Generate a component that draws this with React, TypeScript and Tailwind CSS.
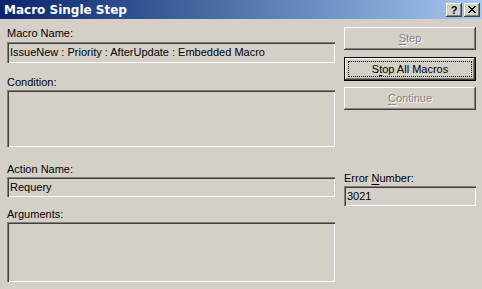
const raised =
  'shadow-[inset_-1px_-1px_0_#404040,inset_1px_1px_0_#ffffff,inset_-2px_-2px_0_#808080,inset_2px_2px_0_#d4d0c8]'
const sunken =
  'shadow-[inset_1px_1px_0_#808080,inset_2px_2px_0_#404040,inset_-1px_-1px_0_#ffffff,inset_-2px_-2px_0_#d4d0c8]'
const disabledText = 'text-[#808080] [text-shadow:1px_1px_0_#ffffff]'

function Field({ value, h }: { value?: string; h: string }) {
  return (
    <div className={`${sunken} ${h} bg-[#d4d0c8] px-[3px] pt-[3px] leading-[14px] text-black whitespace-nowrap overflow-hidden`}>
      {value}
    </div>
  )
}

function Label({ children, className = '' }: { children: React.ReactNode; className?: string }) {
  return <div className={`h-[13px] leading-[13px] ${className}`}>{children}</div>
}

function Button({
  children,
  disabled,
  isDefault,
  className = '',
}: {
  children: React.ReactNode
  disabled?: boolean
  isDefault?: boolean
  className?: string
}) {
  if (isDefault) {
    return (
      <div className={`h-[24px] border border-black ${className}`}>
        <div className={`${raised} h-full bg-[#d4d0c8] p-[3px]`}>
          <div className="h-full border border-dotted border-black flex items-center justify-center text-black">
            {children}
          </div>
        </div>
      </div>
    )
  }
  return (
    <div
      className={`${raised} h-[23px] bg-[#d4d0c8] flex items-center justify-center ${
        disabled ? disabledText : 'text-black'
      } ${className}`}
    >
      {children}
    </div>
  )
}

function CaptionButton({ children }: { children: React.ReactNode }) {
  return (
    <div className={`${raised} w-[16px] h-[14px] bg-[#d4d0c8] flex items-center justify-center`}>
      {children}
    </div>
  )
}

export default function App() {
  return (
    <div
      className="w-[482px] h-[289px] bg-[#d4d0c8] text-[11px] overflow-hidden"
      style={{ fontFamily: '"Liberation Sans", Arial, sans-serif' }}
    >
      {/* Title bar */}
      <div className="h-[19px] bg-linear-to-r from-[#0a246a] to-[#a6caf0] flex items-center pl-[4px] pr-[2px]">
        <span className="text-white font-bold text-[12px] leading-none font-['DejaVu_Sans',sans-serif]">
          Macro Single Step
        </span>
        <div className="ml-auto flex gap-[2px]">
          <CaptionButton>
            <span className="font-bold text-black text-[11px] leading-none mt-[1px]">?</span>
          </CaptionButton>
          <CaptionButton>
            <svg width="8" height="7" viewBox="0 0 8 7" shapeRendering="crispEdges">
              <path
                d="M0 0h2v1h-2zM6 0h2v1h-2zM1 1h2v1h-2zM5 1h2v1h-2zM2 2h4v1h-4zM3 3h2v1h-2zM2 4h4v1h-4zM1 5h2v1h-2zM5 5h2v1h-2zM0 6h2v1h-2zM6 6h2v1h-2z"
                fill="#000"
              />
            </svg>
          </CaptionButton>
        </div>
      </div>

      <div className="flex pl-[7px] pt-[7px]">
        {/* Left column */}
        <div className="w-[328px] flex flex-col">
          <Label className="mt-[1px]">Macro Name:</Label>
          <div className="mt-[2px]">
            <Field h="h-[21px]" value="IssueNew : Priority : AfterUpdate : Embedded Macro" />
          </div>
          <Label className="mt-[13px]">Condition:</Label>
          <div className="mt-[1px]">
            <Field h="h-[57px]" />
          </div>
          <Label className="mt-[16px]">Action Name:</Label>
          <div className="mt-[1px]">
            <Field h="h-[20px]" value="Requery" />
          </div>
          <Label className="mt-[11px]">Arguments:</Label>
          <div className="mt-[1px]">
            <Field h="h-[60px]" />
          </div>
        </div>

        {/* Right column */}
        <div className="w-[132px] ml-[9px] flex flex-col">
          <Button disabled className="mt-[1px]">
            <span>
              <span className="underline underline-offset-[2px]">S</span>tep
            </span>
          </Button>
          <Button isDefault className="mt-[7px]">
            <span>
              S<span className="underline underline-offset-[2px]">t</span>op All Macros
            </span>
          </Button>
          <Button disabled className="mt-[6px]">
            <span>
              <span className="underline underline-offset-[2px]">C</span>ontinue
            </span>
          </Button>
          <Label className="mt-[62px]">
            Error <span className="underline underline-offset-[2px]">N</span>umber:
          </Label>
          <div className="mt-[1px]">
            <Field h="h-[20px]" value="3021" />
          </div>
        </div>
      </div>
    </div>
  )
}
